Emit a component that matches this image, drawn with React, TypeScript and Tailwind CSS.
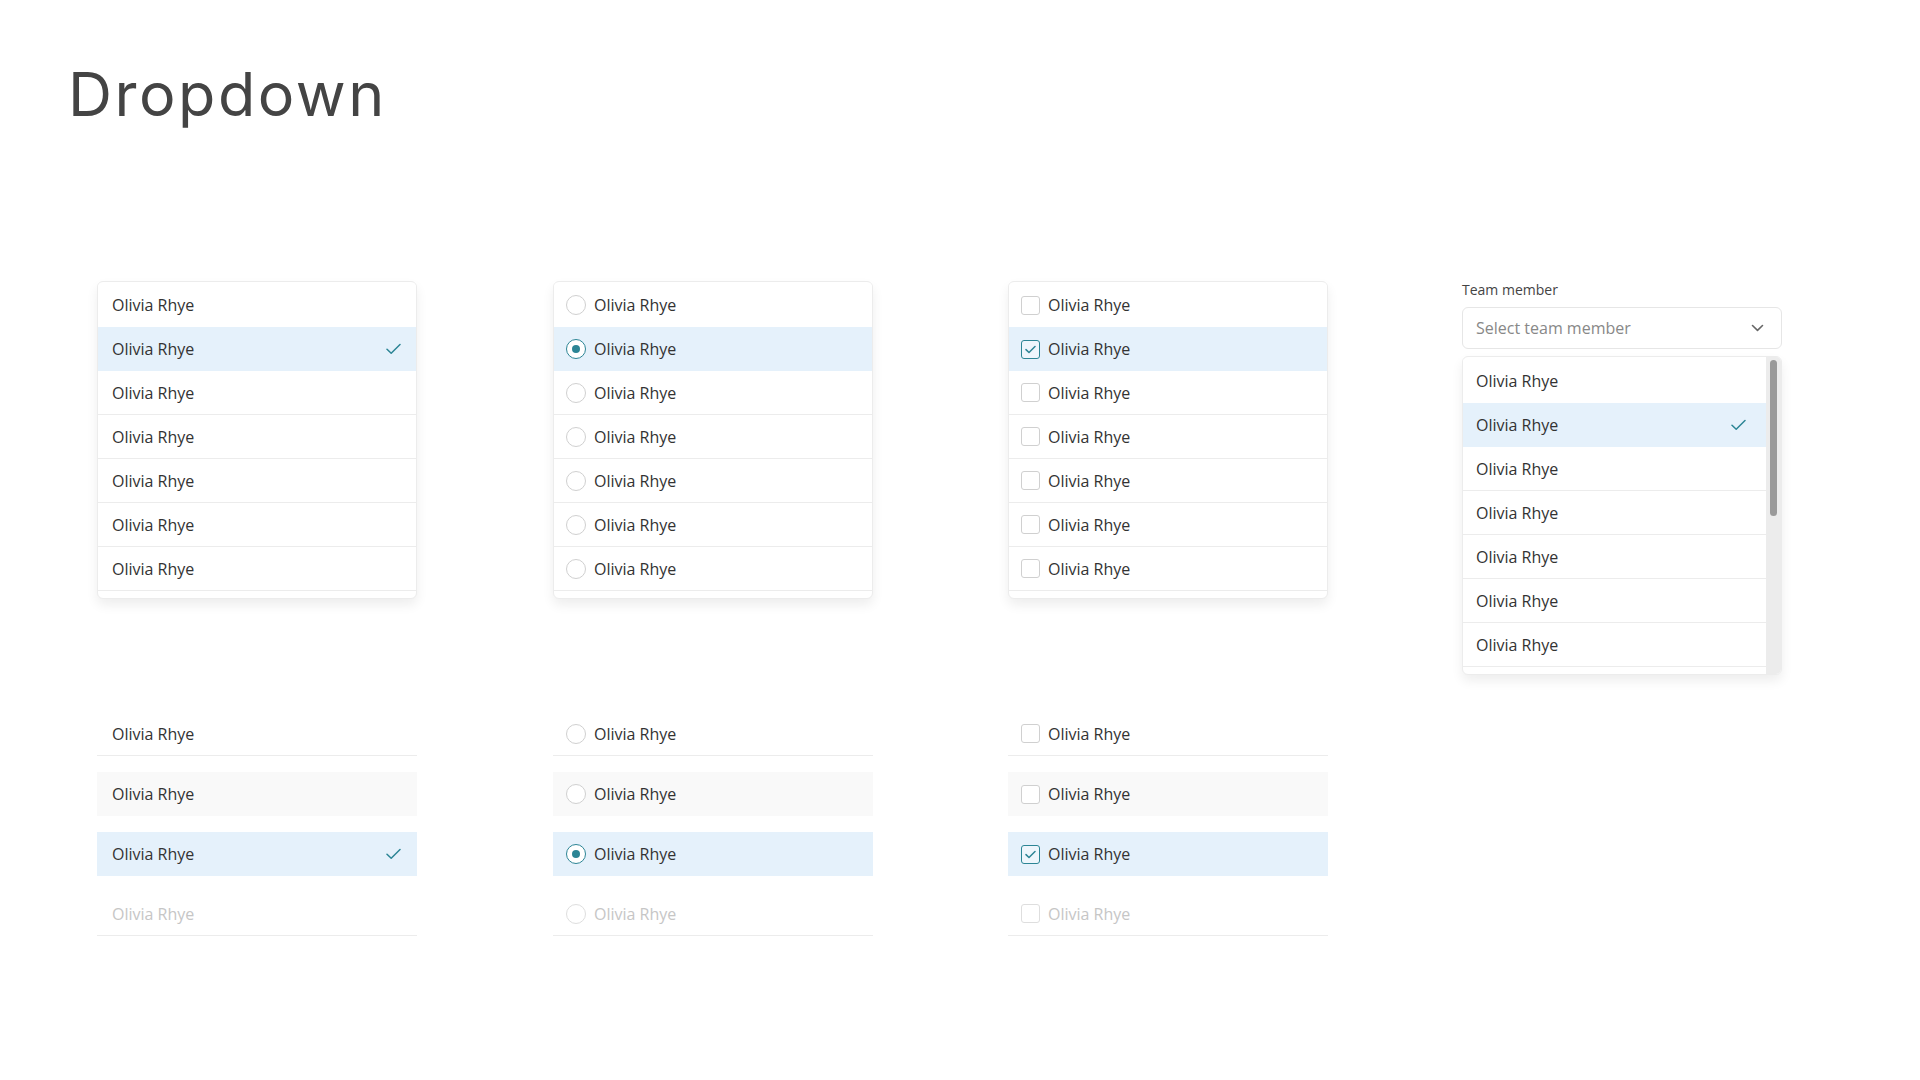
import React from "react";

const TEAL = "#2c8595";

function Check({ className = "" }: { className?: string }) {
  return (
    <svg width="15" height="12" viewBox="0 0 15 12" fill="none" className={className}>
      <path d="M1 6.2 L5.2 10.3 L14 1.5" stroke={TEAL} strokeWidth="1.5" strokeLinecap="round" strokeLinejoin="round" />
    </svg>
  );
}

function Radio({ checked = false, disabled = false }: { checked?: boolean; disabled?: boolean }) {
  return (
    <span
      className={
        "w-5 h-5 rounded-full border flex items-center justify-center shrink-0 bg-white " +
        (checked ? "border-[#2c8595]" : disabled ? "border-[#dedede]" : "border-[#d0d0d0]")
      }
    >
      {checked && <span className="w-[8px] h-[8px] rounded-full bg-[#2c8595]" />}
    </span>
  );
}

function Box({ checked = false, disabled = false }: { checked?: boolean; disabled?: boolean }) {
  return (
    <span
      className={
        "w-[19px] h-[19px] rounded-[3px] border flex items-center justify-center shrink-0 " +
        (checked ? "border-[#2c8595] bg-[#eef6fc]" : disabled ? "border-[#dedede] bg-white" : "border-[#d0d0d0] bg-white")
      }
    >
      {checked && (
        <svg width="11" height="9" viewBox="0 0 11 9" fill="none">
          <path d="M1 4.6 L4 7.5 L10 1.5" stroke={TEAL} strokeWidth="1.5" strokeLinecap="round" strokeLinejoin="round" />
        </svg>
      )}
    </span>
  );
}

type Kind = "plain" | "radio" | "check";

function Lead({ kind, checked, disabled }: { kind: Kind; checked?: boolean; disabled?: boolean }) {
  if (kind === "radio") return <Radio checked={checked} disabled={disabled} />;
  if (kind === "check") return <Box checked={checked} disabled={disabled} />;
  return null;
}

const FONT = { fontFamily: '"Open Sans", "Noto Sans", sans-serif' };

function CardRow({ kind, idx, selected }: { kind: Kind; idx: number; selected: boolean }) {
  return (
    <div
      className={
        "h-[44px] shrink-0 flex items-center gap-2 text-[16px] text-[#333333] " +
        (kind === "plain" ? "pl-[14px] pr-[15px] " : "pl-[12px] pr-[15px] ") +
        (selected ? "bg-[#e5f1fb] " : "bg-white ") +
        (idx >= 2 ? "border-b border-[#ececec]" : "")
      }
    >
      <Lead kind={kind} checked={selected} />
      <span className="flex-1">Olivia Rhye</span>
      {kind === "plain" && selected && <Check />}
    </div>
  );
}

function Card({ kind }: { kind: Kind }) {
  const rows = [0, 1, 2, 3, 4, 5, 6];
  return (
    <div className="w-[320px] h-[318px] mt-[1px] border border-[#ececec] rounded-[6px] bg-white overflow-hidden pt-[1px] flex flex-col shadow-[0_6px_12px_rgba(0,0,0,0.07)]">
      {rows.map((i) => (
        <CardRow key={i} kind={kind} idx={i} selected={i === 1} />
      ))}
    </div>
  );
}

function States({ kind }: { kind: Kind }) {
  const pl = kind === "plain" ? "pl-[15px]" : "pl-[13px]";
  return (
    <div className="w-[320px] flex flex-col gap-4 text-[16px]">
      <div className={"h-[44px] flex items-center gap-2 border-b border-[#ececec] text-[#333333] " + pl}>
        <Lead kind={kind} />
        <span>Olivia Rhye</span>
      </div>
      <div className={"h-[44px] flex items-center gap-2 bg-[#f9f9f9] text-[#333333] " + pl}>
        <Lead kind={kind} />
        <span>Olivia Rhye</span>
      </div>
      <div className={"h-[44px] flex items-center gap-2 bg-[#e5f1fb] text-[#333333] pr-[16px] " + pl}>
        <Lead kind={kind} checked />
        <span className="flex-1">Olivia Rhye</span>
        {kind === "plain" && <Check />}
      </div>
      <div className={"h-[44px] flex items-center gap-2 border-b border-[#ececec] text-[#c6c6c6] " + pl}>
        <Lead kind={kind} disabled />
        <span>Olivia Rhye</span>
      </div>
    </div>
  );
}

function SelectPanel() {
  const rows = [0, 1, 2, 3, 4, 5, 6];
  return (
    <div className="w-[320px] flex flex-col">
      <div className="h-[20px] text-[14px] leading-[20px] font-medium text-[#444444]">Team member</div>
      <div className="mt-[7px] h-[42px] border border-[#e6e6e6] rounded-[6px] flex items-center pl-[13px] pr-[17px] bg-white">
        <span className="flex-1 text-[16px] text-[#888888]">Select team member</span>
        <svg width="13" height="8" viewBox="0 0 13 8" fill="none">
          <path d="M1.5 1.5 L6.5 6.3 L11.5 1.5" stroke="#666666" strokeWidth="1.6" strokeLinecap="round" strokeLinejoin="round" />
        </svg>
      </div>
      <div className="mt-[7px] h-[319px] border border-[#ececec] rounded-[6px] bg-white overflow-hidden flex shadow-[0_6px_12px_rgba(0,0,0,0.07)]">
        <div className="flex-1 pt-[2px] flex flex-col overflow-hidden">
          {rows.map((i) => (
            <div
              key={i}
              className={
                "h-[44px] shrink-0 flex items-center pl-[13px] pr-[20px] text-[16px] text-[#333333] " +
                (i === 1 ? "bg-[#e5f1fb] " : "bg-white ") +
                (i >= 2 ? "border-b border-[#ececec]" : "")
              }
            >
              <span className="flex-1">Olivia Rhye</span>
              {i === 1 && <Check />}
            </div>
          ))}
        </div>
        <div className="w-[15px] bg-[#ececec] pt-[3px] flex justify-center">
          <div className="w-[7px] h-[156px] rounded-full bg-[#9a9a9a]" />
        </div>
      </div>
    </div>
  );
}

export default function App() {
  return (
    <div className="w-[1920px] h-[1080px] bg-white overflow-hidden" style={FONT}>
      <div
        className="pt-[64px] pl-[68px] text-[61px] leading-[60px] text-[#444444] tracking-[2.5px]"
        style={{ fontFamily: '"Inter", "Lato", sans-serif' }}
      >
        Dropdown
      </div>
      <div className="mt-[156px] pl-[97px] flex items-start">
        <Card kind="plain" />
        <div className="ml-[136px]">
          <Card kind="radio" />
        </div>
        <div className="ml-[135px]">
          <Card kind="check" />
        </div>
        <div className="ml-[134px]">
          <SelectPanel />
        </div>
      </div>
      <div className="mt-[37px] pl-[97px] flex items-start">
        <States kind="plain" />
        <div className="ml-[136px]">
          <States kind="radio" />
        </div>
        <div className="ml-[135px]">
          <States kind="check" />
        </div>
      </div>
    </div>
  );
}
